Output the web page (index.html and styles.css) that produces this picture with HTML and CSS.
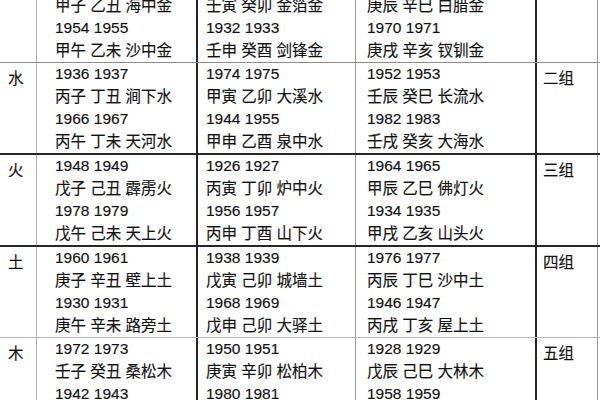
FILE: index.html
```html
<!DOCTYPE html>
<html lang="zh">
<head>
<meta charset="utf-8">
<title>纳音五行表</title>
<link rel="stylesheet" href="styles.css">
</head>
<body>
<div class="sheet">
  <div class="row b-mid">
    <div class="c c1 lbl">金</div>
    <div class="c c2"><div class="ln">1984 1985</div><div class="ln">甲子 乙丑 海中金</div><div class="ln">1954 1955</div><div class="ln">甲午 乙未 沙中金</div></div>
    <div class="c c3"><div class="ln">1962 1963</div><div class="ln">壬寅 癸卯 金箔金</div><div class="ln">1932 1933</div><div class="ln">壬申 癸酉 剑锋金</div></div>
    <div class="c c4"><div class="ln">1940 1941</div><div class="ln">庚辰 辛巳 白腊金</div><div class="ln">1970 1971</div><div class="ln">庚戌 辛亥 钗钏金</div></div>
    <div class="c c5 lbl">一组</div>
  </div>
  <div class="row b-dark">
    <div class="c c1 lbl">水</div>
    <div class="c c2"><div class="ln">1936 1937</div><div class="ln">丙子 丁丑 涧下水</div><div class="ln">1966 1967</div><div class="ln">丙午 丁未 天河水</div></div>
    <div class="c c3"><div class="ln">1974 1975</div><div class="ln">甲寅 乙卯 大溪水</div><div class="ln">1944 1955</div><div class="ln">甲申 乙酉 泉中水</div></div>
    <div class="c c4"><div class="ln">1952 1953</div><div class="ln">壬辰 癸巳 长流水</div><div class="ln">1982 1983</div><div class="ln">壬戌 癸亥 大海水</div></div>
    <div class="c c5 lbl">二组</div>
  </div>
  <div class="row b-dark">
    <div class="c c1 lbl">火</div>
    <div class="c c2"><div class="ln">1948 1949</div><div class="ln">戊子 己丑 霹雳火</div><div class="ln">1978 1979</div><div class="ln">戊午 己未 天上火</div></div>
    <div class="c c3"><div class="ln">1926 1927</div><div class="ln">丙寅 丁卯 炉中火</div><div class="ln">1956 1957</div><div class="ln">丙申 丁酉 山下火</div></div>
    <div class="c c4"><div class="ln">1964 1965</div><div class="ln">甲辰 乙巳 佛灯火</div><div class="ln">1934 1935</div><div class="ln">甲戌 乙亥 山头火</div></div>
    <div class="c c5 lbl">三组</div>
  </div>
  <div class="row b-light">
    <div class="c c1 lbl">土</div>
    <div class="c c2"><div class="ln">1960 1961</div><div class="ln">庚子 辛丑 壁上土</div><div class="ln">1930 1931</div><div class="ln">庚午 辛未 路旁土</div></div>
    <div class="c c3"><div class="ln">1938 1939</div><div class="ln">戊寅 己卯 城墙土</div><div class="ln">1968 1969</div><div class="ln">戊申 己卯 大驿土</div></div>
    <div class="c c4"><div class="ln">1976 1977</div><div class="ln">丙辰 丁巳 沙中土</div><div class="ln">1946 1947</div><div class="ln">丙戌 丁亥 屋上土</div></div>
    <div class="c c5 lbl">四组</div>
  </div>
  <div class="row">
    <div class="c c1 lbl">木</div>
    <div class="c c2"><div class="ln">1972 1973</div><div class="ln">壬子 癸丑 桑松木</div><div class="ln">1942 1943</div><div class="ln">壬午 癸未 杨柳木</div></div>
    <div class="c c3"><div class="ln">1950 1951</div><div class="ln">庚寅 辛卯 松柏木</div><div class="ln">1980 1981</div><div class="ln">庚申 辛酉 石榴木</div></div>
    <div class="c c4"><div class="ln">1928 1929</div><div class="ln">戊辰 己巳 大林木</div><div class="ln">1958 1959</div><div class="ln">戊戌 己亥 平地木</div></div>
    <div class="c c5 lbl">五组</div>
  </div>
</div>
</body>
</html>
```
FILE: styles.css
```css
html, body {
  margin: 0;
  padding: 0;
  background: #ffffff;
}
body {
  width: 600px;
  height: 400px;
  overflow: hidden;
  font-family: "Liberation Sans", "Noto Sans CJK SC", sans-serif;
  font-size: 15.5px;
  color: #111111;
}
.sheet {
  margin-top: -28px;
  width: 600px;
}
.row {
  display: grid;
  grid-template-columns: 37px 161px 158px 181px 61px 2px;
}
.row.b-mid { border-bottom: 1px solid #8c8c8c; }
.row.b-dark { border-bottom: 2px solid #262626; }
.row.b-light { border-bottom: 1px solid #b4b4b4; }
.c {
  box-sizing: border-box;
}
.ln {
  height: 22.5px;
  line-height: 22.5px;
  white-space: nowrap;
  -webkit-text-stroke: 0.15px #111111;
}
.lbl {
  line-height: 22.5px;
  padding-top: 5px;
  -webkit-text-stroke: 0.15px #111111;
}
.c1 {
  border-right: 1px solid #b0b0b0;
  padding-left: 8px;
}
.c2 {
  border-right: 2px solid #262626;
  padding-left: 18px;
}
.c3 {
  border-right: 1px solid #9a9a9a;
  padding-left: 8px;
}
.c4 {
  border-right: 2px solid #262626;
  padding-left: 11px;
}
.c5 {
  border-right: 1px solid #9a9a9a;
  padding-left: 6px;
}
```
